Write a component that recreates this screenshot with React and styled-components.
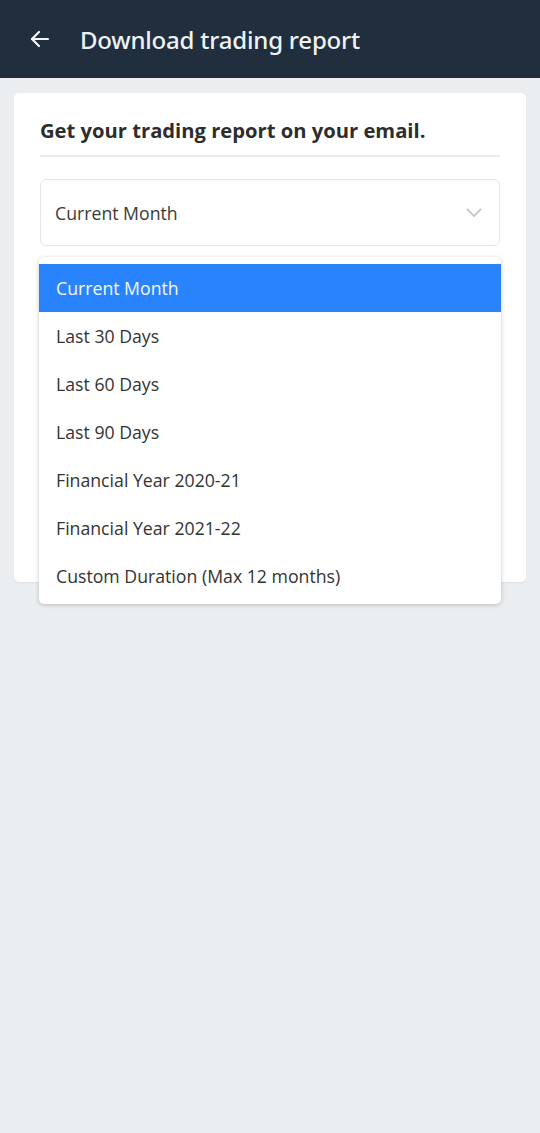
import React from 'react'
import styled, { createGlobalStyle } from 'styled-components'

const GlobalStyle = createGlobalStyle`
  * { box-sizing: border-box; }
  body {
    margin: 0;
    background: #ebeef1;
    font-family: "Open Sans", "Noto Sans", sans-serif;
  }
`

const Page = styled.div`
  min-height: 1133px;
  background: #ebeef1;
`

const Header = styled.header`
  height: 78px;
  background: #212e3e;
  display: flex;
  align-items: center;
  padding: 0 0 0 28px;
  gap: 28px;
`

const BackButton = styled.button`
  border: none;
  background: none;
  padding: 0;
  display: flex;
  color: #f2f5f8;
`

const HeaderTitle = styled.h1`
  margin: 0;
  font-family: "Noto Sans", sans-serif;
  font-size: 24px;
  font-weight: 500;
  color: #eef2f6;
  letter-spacing: -0.2px;
`

const Card = styled.section`
  position: relative;
  margin: 15px 14px 0;
  background: #fff;
  border-radius: 5px;
  box-shadow: 0 1px 2px rgba(0, 0, 0, 0.06);
  padding: 16px 26px 0;
  height: 489px;
`

const CardTitle = styled.h2`
  margin: 0;
  padding: 7px 0 11px;
  font-size: 20.2px;
  font-weight: 700;
  color: #2d2d2d;
  border-bottom: 2px solid #e9eaec;
`

const Select = styled.div`
  margin-top: 22px;
  height: 67px;
  border: 1px solid #e6e7e9;
  border-radius: 6px;
  display: flex;
  align-items: center;
  justify-content: space-between;
  padding: 0 17px 0 14px;
  font-size: 17.7px;
  color: #3a3a3a;
`

const Menu = styled.ul`
  position: absolute;
  left: 25px;
  right: 25px;
  top: 164px;
  margin: 0;
  padding: 7px 0 4px;
  list-style: none;
  background: #fff;
  border-radius: 5px;
  box-shadow: 0 1px 4px rgba(0, 0, 0, 0.22);
`

const Option = styled.li`
  height: 48px;
  display: flex;
  align-items: center;
  padding: 0 17px 1px;
  font-size: 17.7px;
  color: ${p => (p.$active ? '#f4f8ff' : '#333')};
  background: ${p => (p.$active ? '#2983fd' : 'transparent')};
`

const options = [
  'Current Month',
  'Last 30 Days',
  'Last 60 Days',
  'Last 90 Days',
  'Financial Year 2020-21',
  'Financial Year 2021-22',
  'Custom Duration (Max 12 months)',
]

export default function App() {
  return (
    <Page>
      <GlobalStyle />
      <Header>
        <BackButton>
          <svg width="24" height="24" viewBox="0 0 24 24" fill="none" stroke="currentColor" strokeWidth="2.2" strokeLinecap="round" strokeLinejoin="round">
            <path d="M20 12H4" />
            <path d="M11 5l-7 7 7 7" />
          </svg>
        </BackButton>
        <HeaderTitle>Download trading report</HeaderTitle>
      </Header>
      <Card>
        <CardTitle>Get your trading report on your email.</CardTitle>
        <Select>
          <span>Current Month</span>
          <svg width="16" height="10" viewBox="0 0 16 10" fill="none" stroke="#cbcbcb" strokeWidth="2" strokeLinecap="round" strokeLinejoin="round">
            <path d="M1.5 1.5l6.5 6.5 6.5-6.5" />
          </svg>
        </Select>
        <Menu>
          {options.map((o, i) => (
            <Option key={o} $active={i === 0}>{o}</Option>
          ))}
        </Menu>
      </Card>
    </Page>
  )
}
